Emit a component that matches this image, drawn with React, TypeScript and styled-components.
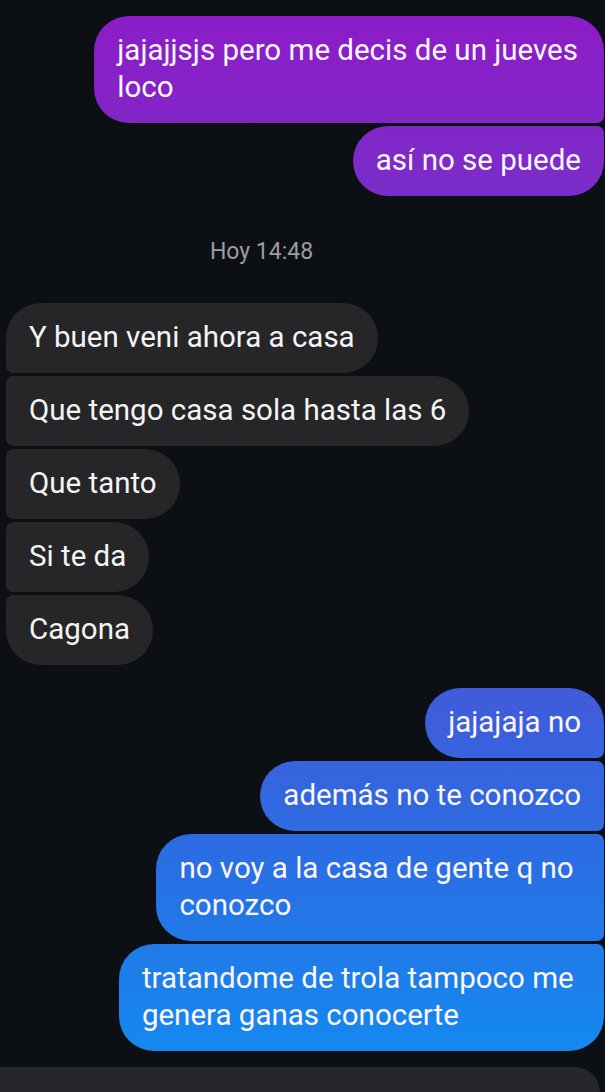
import React from "react";
import styled, { createGlobalStyle, css } from "styled-components";

const Global = createGlobalStyle`
  html, body {
    margin: 0;
    padding: 0;
    background: #0c0f14;
    overflow: hidden;
  }
  body {
    font-family: Roboto, "Noto Sans", "Liberation Sans", sans-serif;
    -webkit-font-smoothing: antialiased;
  }
`;

type Side = "in" | "out";
type Pos = "first" | "middle" | "last" | "single";

const BIG = "35px";
const SMALL = "7px";

const Page = styled.div`
  width: 605px;
  height: 1092px;
  display: flex;
  flex-direction: column;
  background: #0c0f14;
  overflow: hidden;
`;

const Thread = styled.div`
  display: flex;
  flex-direction: column;
  padding: 16px 1px 0 6px;
`;

const Group = styled.div<{ $side: Side; $gapTop?: number }>`
  display: flex;
  flex-direction: column;
  gap: 3px;
  align-items: ${(p) => (p.$side === "out" ? "flex-end" : "flex-start")};
  margin-top: ${(p) => p.$gapTop ?? 0}px;
`;

const radius = (side: Side, pos: Pos) => {
  const topNear = pos === "first" || pos === "single" ? BIG : SMALL;
  const botNear = pos === "last" || pos === "single" ? BIG : SMALL;
  if (side === "out") {
    return css`
      border-radius: ${BIG} ${topNear} ${botNear} ${BIG};
    `;
  }
  return css`
    border-radius: ${topNear} ${BIG} ${BIG} ${botNear};
  `;
};

const Bubble = styled.div<{ $side: Side; $pos: Pos }>`
  white-space: pre;
  padding: 16px 23px 17px 23px;
  font-size: 29.5px;
  line-height: 37px;
  color: #ffffff;
  ${(p) => radius(p.$side, p.$pos)}
  ${(p) =>
    p.$side === "out"
      ? css`
          background: linear-gradient(
            to bottom,
            #8e1ac7 0px,
            #7c2cc8 180px,
            #5a46d2 450px,
            #3d5edc 720px,
            #2a6ee3 860px,
            #1489ef 1050px
          );
          background-attachment: fixed;
          color: #fbf6ff;
        `
      : css`
          background: #262628;
          color: #f4f4f4;
        `}
`;

const Line = styled.span`
  display: block;
`;

const Stamp = styled.div`
  margin: 42px 0 37px 0;
  padding-right: 87px;
  text-align: center;
  font-size: 23px;
  line-height: 28px;
  color: #9c9ca1;
`;

const Composer = styled.div`
  margin-top: 16px;
  width: 600px;
  flex: 1;
  background: #25272c;
  border-top-right-radius: 40px;
`;

const posOf = (i: number, n: number): Pos =>
  n === 1 ? "single" : i === 0 ? "first" : i === n - 1 ? "last" : "middle";

type Msg = string | string[];

const MessageGroup = ({
  side,
  messages,
  gapTop,
}: {
  side: Side;
  messages: Msg[];
  gapTop?: number;
}) => (
  <Group $side={side} $gapTop={gapTop}>
    {messages.map((m, i) => (
      <Bubble key={i} $side={side} $pos={posOf(i, messages.length)}>
        {(Array.isArray(m) ? m : [m]).map((l, j) => (
          <Line key={j}>{l}</Line>
        ))}
      </Bubble>
    ))}
  </Group>
);

export default function App() {
  return (
    <>
      <Global />
      <Page>
        <Thread>
          <MessageGroup
            side="out"
            messages={[
              ["jajajjsjs pero me decis de un jueves\u200A", "loco"],
              "así no se puede",
            ]}
          />
          <Stamp>Hoy 14:48</Stamp>
          <MessageGroup
            side="in"
            messages={[
              "Y buen veni ahora a casa",
              "Que tengo casa sola hasta las 6",
              "Que tanto",
              "Si te da",
              "Cagona",
            ]}
          />
          <MessageGroup
            side="out"
            gapTop={23}
            messages={[
              "jajajaja no",
              "además no te conozco",
              ["no voy a la casa de gente q no ", "conozco"],
              ["tratandome de trola tampoco me ", "genera ganas conocerte"],
            ]}
          />
        </Thread>
        <Composer />
      </Page>
    </>
  );
}
